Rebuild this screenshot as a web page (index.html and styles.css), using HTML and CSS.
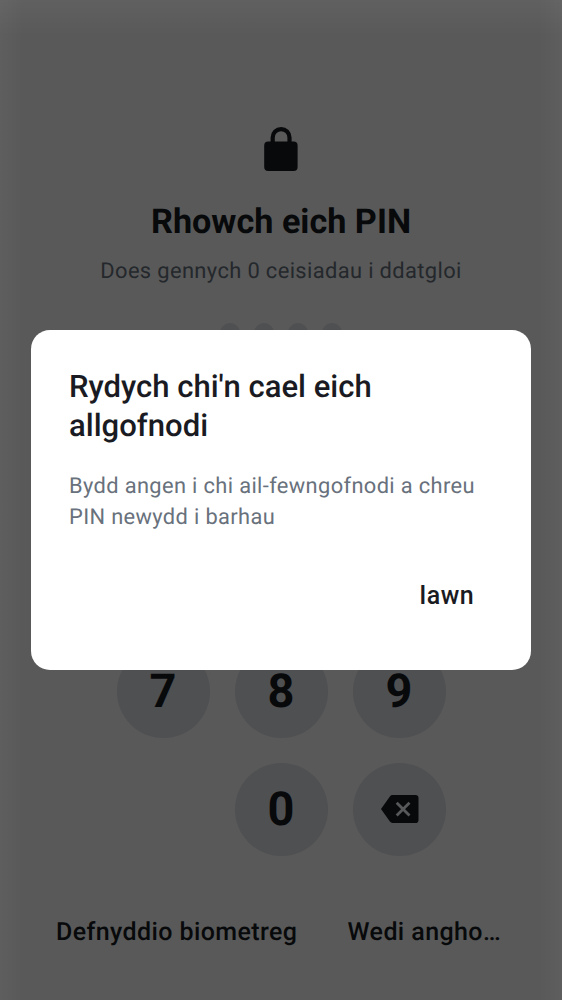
FILE: index.html
```html
<!DOCTYPE html>
<html lang="cy">
<head>
<meta charset="utf-8">
<title>PIN</title>
<link rel="stylesheet" href="styles.css">
</head>
<body>
<main class="screen">
  <svg class="lock" viewBox="0 0 34 44" aria-hidden="true"><path d="M4.200 14.500h25.400a4 4 0 0 1 4 4V40a4 4 0 0 1-4 4H4.200a4 4 0 0 1-4-4V18.500a4 4 0 0 1 4-4z"/><path class="shackle" d="M8.700 16v-5.500a8.400 8.400 0 0 1 16.800 0V16"/></svg>
  <h1 class="title">Rhowch eich PIN</h1>
  <p class="subtitle">Does gennych 0 ceisiadau i ddatgloi</p>
  <div class="dots"><i></i><i></i><i></i><i></i></div>
  <div class="keypad">
    <b class="key">7</b><b class="key">8</b><b class="key">9</b>
    <span></span><b class="key">0</b>
    <b class="key erase"><svg class="delete" viewBox="0 0 38 28" aria-hidden="true"><path d="M11.500 0h22.900a3.100 3.100 0 0 1 3.100 3.100v21.800a3.100 3.100 0 0 1-3.100 3.100H11.500q-1.600 0-2.600-1.400L0 14l8.900-12.600Q9.900 0 11.500 0z"/><path class="cross" d="M15.700 7.800l12.800 12.800M28.500 7.800L15.700 20.600"/></svg></b>
  </div>
  <footer class="links"><span>Defnyddio biometreg</span><span>Wedi angho…</span></footer>
</main>
<div class="overlay">
  <section class="dialog" role="dialog">
    <h2 class="heading">Rydych chi'n cael eich allgofnodi</h2>
    <p class="message">Bydd angen i chi ail-fewngofnodi a chreu PIN newydd i barhau</p>
    <button class="confirm">Iawn</button>
  </section>
</div>
</body>
</html>
```
FILE: styles.css
```css
* { box-sizing: border-box; }
body { margin: 0; font-family: Roboto, sans-serif; background: #595959; color: #08090b; text-rendering: geometricPrecision; }
.screen {
  height: 1000px; overflow: hidden; display: flex; flex-direction: column; align-items: center; padding-top: 127px;
  background:
    linear-gradient(#ffffff0b, #fff0 36px),
    linear-gradient(90deg, #ffffff08, #fff0 24px, #fff0 calc(100% - 24px), #ffffff08);
}
.lock { width: 34px; height: 44px; flex: none; fill: #08090b; }
.shackle { fill: none; stroke: #08090b; stroke-width: 4.2; }
.title { margin: 30px 0 0; font-size: 34.2px; line-height: 42px; font-weight: 700; white-space: nowrap; }
.subtitle { margin: 13px 0 0; font-size: 21.9px; line-height: 32px; letter-spacing: .36px; color: #24282c; white-space: nowrap; }
.dots { display: flex; gap: 14px; margin-top: 35px; height: 20px; }
.dots i { width: 20px; height: 20px; border-radius: 50%; background: #4f5052; }
.keypad { display: grid; grid-template-columns: repeat(3, 93px); grid-auto-rows: 93px; gap: 25px; margin-top: 301.5px; }
.key { border-radius: 50%; background: #4f5052; display: flex; align-items: center; justify-content: center; font-size: 46.9px; line-height: 56px; padding-top: 2px; }
.erase { padding-top: 0; }
.delete { width: 38px; height: 28px; fill: #08090b; position: relative; left: .5px; }
.cross { stroke: #57585a; stroke-width: 2.8; }
.links { width: 100%; padding: 0 61px 0 56px; margin-top: 60.5px; display: flex; justify-content: space-between; font-size: 25px; line-height: 34px; font-weight: 500; letter-spacing: .4px; white-space: nowrap; }
.overlay { position: absolute; inset: 0; display: flex; align-items: center; justify-content: center; }
.dialog { width: 500px; height: 340px; border-radius: 19px; background: #fff; padding: 37px 38px; display: flex; flex-direction: column; }
.heading { margin: 0; font-size: 31.05px; line-height: 39px; font-weight: 500; color: #1a1b22; width: 340px; }
.message { margin: 26px 0 0; font-size: 21.85px; line-height: 31px; letter-spacing: .36px; color: #68717c; width: 424px; }
.confirm { align-self: flex-end; margin: 46px 19px 0 0; padding: 0; border: 0; background: none; font: 500 25px/34px Roboto, sans-serif; letter-spacing: .4px; color: #1a1b22; }
```
